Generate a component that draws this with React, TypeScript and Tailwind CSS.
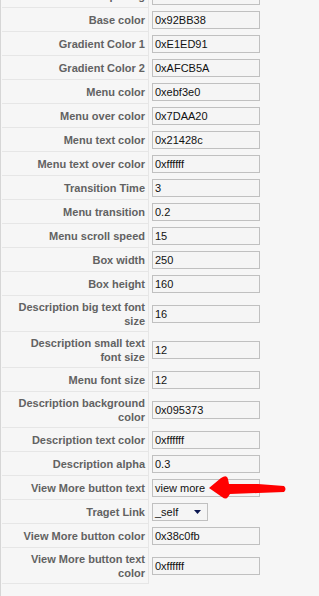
type Param = {
  label: string;
  value: string;
  tall?: boolean;
  kind?: "text" | "select";
};

const params: Param[] = [
  { label: "Menu spacing", value: "" },
  { label: "Base color", value: "0x92BB38" },
  { label: "Gradient Color 1", value: "0xE1ED91" },
  { label: "Gradient Color 2", value: "0xAFCB5A" },
  { label: "Menu color", value: "0xebf3e0" },
  { label: "Menu over color", value: "0x7DAA20" },
  { label: "Menu text color", value: "0x21428c" },
  { label: "Menu text over color", value: "0xffffff" },
  { label: "Transition Time", value: "3" },
  { label: "Menu transition", value: "0.2" },
  { label: "Menu scroll speed", value: "15" },
  { label: "Box width", value: "250" },
  { label: "Box height", value: "160" },
  { label: "Description big text font size", value: "16", tall: true },
  { label: "Description small text font size", value: "12", tall: true },
  { label: "Menu font size", value: "12" },
  { label: "Description background color", value: "0x095373", tall: true },
  { label: "Description text color", value: "0xffffff" },
  { label: "Description alpha", value: "0.3" },
  { label: "View More button text", value: "view more" },
  { label: "Traget Link", value: "_self", kind: "select" },
  { label: "View More button color", value: "0x38c0fb" },
  { label: "View More button text color", value: "0xffffff", tall: true },
];

function RedArrow() {
  return (
    <svg
      className="pointer-events-none absolute left-0 top-0"
      width="319"
      height="596"
      viewBox="0 0 319 596"
      aria-hidden="true"
    >
      <path
        d="M209,488 L221,478 Q227,474 228,479 L229,484 L258,484 L284,486 Q287,489 284,492 L258,493 L230,494 L228,497 Q226,500 222,497 Z"
        fill="#ff0000"
      />
    </svg>
  );
}

function ParamRow({ param, first }: { param: Param; first: boolean }) {
  return (
    <div
      className={`grid grid-cols-[147px_1fr] ${param.tall ? "h-[36px]" : "h-[24px]"} ${
        first ? "mt-[-16px]" : ""
      }`}
    >
      <div className="flex items-center justify-end border-b border-r border-[#e6e6e6] pr-[3px] pl-[5px] text-right text-[11px] font-bold leading-[14px] text-[#626262]">
        {param.label}
      </div>
      <div className="flex items-center pl-[3px]">
        {param.kind === "select" ? (
          <div className="flex h-[18px] w-[56px] items-center justify-between border border-[#c0c0c0] bg-[#f5f5f5] pl-[2px] pr-[6px] text-[11px] text-[#111111]">
            <span>{param.value}</span>
            <svg width="7" height="4" viewBox="0 0 7 4" aria-hidden="true">
              <path d="M0,0 L7,0 L3.5,4 Z" fill="#0a1650" />
            </svg>
          </div>
        ) : (
          <div className="flex h-[18px] w-[108px] items-center border border-[#c0c0c0] bg-[#f5f5f5] px-[2px] text-[11px] text-[#111111]">
            {param.value}
          </div>
        )}
      </div>
    </div>
  );
}

export default function App() {
  return (
    <div className="relative h-[596px] w-[319px] overflow-hidden bg-[#f6f6f6] font-['Liberation_Sans',Arial,sans-serif]">
      <div className="flex h-full flex-col border-l border-[#d6d6d6] pl-px">
        {params.map((param, i) => (
          <ParamRow key={param.label} param={param} first={i === 0} />
        ))}
      </div>
      <RedArrow />
    </div>
  );
}
